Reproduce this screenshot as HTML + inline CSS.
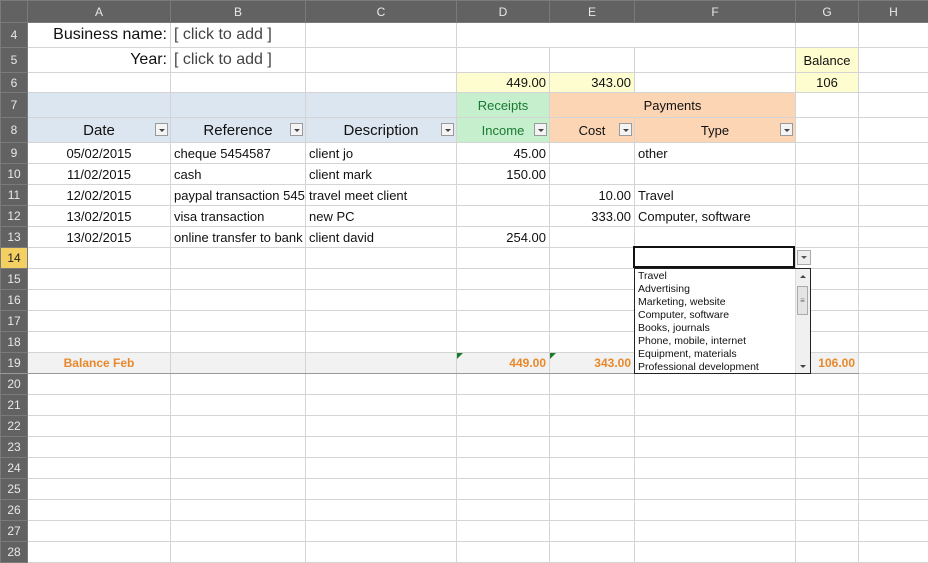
<!DOCTYPE html>
<html><head><meta charset="utf-8"><style>
body{margin:0;width:928px;height:562px;overflow:hidden;background:#fff;font-family:"Liberation Sans",Arial,sans-serif;}
table{border-collapse:collapse;table-layout:fixed;width:928px;position:absolute;left:0;top:0;}
td{border:1px solid #d4d4d4;padding:0 3px;font-size:13px;color:#111;white-space:nowrap;overflow:hidden;position:relative;box-sizing:border-box;}
tr.h td{background:#626262;color:#e8e8e8;text-align:center;font-size:12px;border-color:#7a7a7a;}
td.rh{background:#626262;color:#e8e8e8;text-align:center;font-size:12px;padding:0;border-color:#7a7a7a;}
td.sel{background:#f4cf62;color:#222;}
.r{text-align:right}.c{text-align:center}
.blue{background:#dce6f1}.grn{background:#c6efce;color:#1a7a30}.pch{background:#fcd5b4}.yel{background:#fefdcf}
.big{font-size:16px}.hd{font-size:15px}
tr.tot td{background:#f2f2f2;border-top:1px solid #999;border-bottom:1px solid #999;color:#e8882a;font-weight:bold;font-size:12px}
tr.tot td.rh{background:#626262;color:#e8e8e8;font-weight:normal}
.fb{position:absolute;right:2px;top:5px;width:13px;height:13px;border:1px solid #9a9a9a;background:#f4f4f4;box-sizing:border-box}
.fb:after{content:"";position:absolute;left:3px;top:5px;border-left:3px solid transparent;border-right:3px solid transparent;border-top:3px solid #444}
.tri{position:absolute;left:0;top:0;border-right:6px solid transparent;border-top:6px solid #1c7a2c}
</style></head><body>
<table>
<colgroup><col style="width:27px"><col style="width:143px"><col style="width:135px"><col style="width:151px"><col style="width:93px"><col style="width:85px"><col style="width:161px"><col style="width:63px"><col style="width:70px"></colgroup>
<tr class="h" style="height:22px"><td></td><td>A</td><td>B</td><td>C</td><td>D</td><td>E</td><td class="sel">F</td><td>G</td><td>H</td></tr>
<tr style="height:25px"><td class="rh">4</td><td class="r big">Business name:</td><td class="big" style="color:#444;overflow:visible">[ click to add ]</td><td></td><td style="border-right-color:#fff"></td><td style="border-right-color:#fff"></td><td></td><td></td><td></td></tr>
<tr style="height:25px"><td class="rh">5</td><td class="r big">Year:</td><td class="big" style="color:#444;overflow:visible">[ click to add ]</td><td></td><td></td><td></td><td></td><td class="yel c">Balance</td><td></td></tr>
<tr style="height:20px"><td class="rh">6</td><td></td><td></td><td></td><td class="yel r">449.00</td><td class="yel r">343.00</td><td></td><td class="yel c">106</td><td></td></tr>
<tr style="height:25px"><td class="rh">7</td><td class="blue"></td><td class="blue"></td><td class="blue"></td><td class="grn c">Receipts</td><td class="pch c" colspan="2">Payments</td><td></td><td></td></tr>
<tr style="height:25px"><td class="rh">8</td><td class="blue c hd">Date<span class="fb"></span></td><td class="blue c hd">Reference<span class="fb"></span></td><td class="blue c hd">Description<span class="fb"></span></td><td class="grn c">Income<span class="fb"></span></td><td class="pch c">Cost<span class="fb"></span></td><td class="pch c">Type<span class="fb"></span></td><td></td><td></td></tr>
<tr style="height:21px"><td class="rh">9</td><td class="c">05/02/2015</td><td>cheque 5454587</td><td>client jo</td><td class="r">45.00</td><td></td><td>other</td><td></td><td></td></tr>
<tr style="height:21px"><td class="rh">10</td><td class="c">11/02/2015</td><td>cash</td><td>client mark</td><td class="r">150.00</td><td></td><td></td><td></td><td></td></tr>
<tr style="height:21px"><td class="rh">11</td><td class="c">12/02/2015</td><td style="text-overflow:clip">paypal transaction 5454</td><td>travel meet client</td><td></td><td class="r">10.00</td><td>Travel</td><td></td><td></td></tr>
<tr style="height:21px"><td class="rh">12</td><td class="c">13/02/2015</td><td>visa transaction</td><td>new PC</td><td></td><td class="r">333.00</td><td>Computer, software</td><td></td><td></td></tr>
<tr style="height:21px"><td class="rh">13</td><td class="c">13/02/2015</td><td>online transfer to bank</td><td>client david</td><td class="r">254.00</td><td></td><td></td><td></td><td></td></tr>
<tr style="height:21px"><td class="rh sel">14</td><td></td><td></td><td></td><td></td><td></td><td></td><td></td><td></td></tr>
<tr style="height:21px"><td class="rh">15</td><td></td><td></td><td></td><td></td><td></td><td></td><td></td><td></td></tr>
<tr style="height:21px"><td class="rh">16</td><td></td><td></td><td></td><td></td><td></td><td></td><td></td><td></td></tr>
<tr style="height:21px"><td class="rh">17</td><td></td><td></td><td></td><td></td><td></td><td></td><td></td><td></td></tr>
<tr style="height:21px"><td class="rh">18</td><td></td><td></td><td></td><td></td><td></td><td></td><td></td><td></td></tr>
<tr class="tot" style="height:21px"><td class="rh">19</td><td class="c">Balance Feb</td><td></td><td></td><td class="r"><span class="tri"></span>449.00</td><td class="r"><span class="tri"></span>343.00</td><td></td><td class="r">106.00</td><td style="background:#fff;border-top-color:#d4d4d4;border-bottom-color:#d4d4d4"></td></tr>
<tr style="height:21px"><td class="rh">20</td><td></td><td></td><td></td><td></td><td></td><td></td><td></td><td></td></tr>
<tr style="height:21px"><td class="rh">21</td><td></td><td></td><td></td><td></td><td></td><td></td><td></td><td></td></tr>
<tr style="height:21px"><td class="rh">22</td><td></td><td></td><td></td><td></td><td></td><td></td><td></td><td></td></tr>
<tr style="height:21px"><td class="rh">23</td><td></td><td></td><td></td><td></td><td></td><td></td><td></td><td></td></tr>
<tr style="height:21px"><td class="rh">24</td><td></td><td></td><td></td><td></td><td></td><td></td><td></td><td></td></tr>
<tr style="height:21px"><td class="rh">25</td><td></td><td></td><td></td><td></td><td></td><td></td><td></td><td></td></tr>
<tr style="height:21px"><td class="rh">26</td><td></td><td></td><td></td><td></td><td></td><td></td><td></td><td></td></tr>
<tr style="height:21px"><td class="rh">27</td><td></td><td></td><td></td><td></td><td></td><td></td><td></td><td></td></tr>
<tr style="height:21px"><td class="rh">28</td><td></td><td></td><td></td><td></td><td></td><td></td><td></td><td></td></tr>
</table>
<div style="position:absolute;left:633px;top:246px;width:162px;height:22px;border:2px solid #111;box-sizing:border-box;background:#fff"></div>
<div style="position:absolute;left:797px;top:250px;width:14px;height:15px;border:1px solid #aaa;background:#eee;box-sizing:border-box"><div style="position:absolute;left:3px;top:5px;border-left:3px solid transparent;border-right:3px solid transparent;border-top:3px solid #555"></div></div>
<div style="position:absolute;left:634px;top:268px;width:177px;height:106px;border:1px solid #222;background:#fff;box-sizing:border-box;overflow:hidden;font-size:10.5px;line-height:13px;color:#111;padding:1px 0 0 3px">
Travel<br>Advertising<br>Marketing, website<br>Computer, software<br>Books, journals<br>Phone, mobile, internet<br>Equipment, materials<br>Professional development
<div style="position:absolute;right:0;top:0;width:14px;height:104px;background:#f0f0f0;border-left:1px solid #ddd">
<div style="position:absolute;left:4px;top:6px;border-left:3px solid transparent;border-right:3px solid transparent;border-bottom:3px solid #444"></div>
<div style="position:absolute;left:1px;top:17px;width:11px;height:29px;background:#e4e4e4;border:1px solid #aaa;box-sizing:border-box;font-size:8px;line-height:27px;text-align:center;color:#666">≡</div>
<div style="position:absolute;left:4px;top:96px;border-left:3px solid transparent;border-right:3px solid transparent;border-top:3px solid #444"></div>
</div></div>
</body></html>
